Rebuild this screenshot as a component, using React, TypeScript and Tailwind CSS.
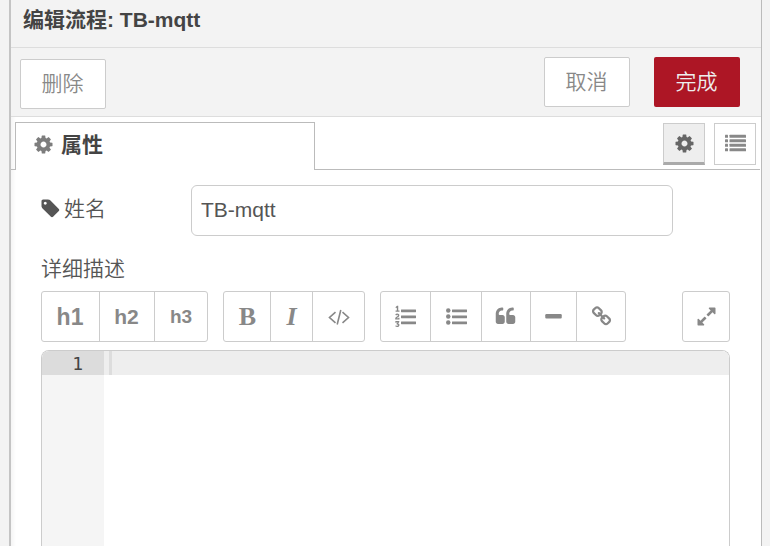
import type { ReactNode } from "react";

const COG =
  "M1152 896q0-106-75-181t-181-75-181 75-75 181 75 181 181 75 181-75 75-181zm512-109v222q0 12-8 23t-20 13l-185 28q-19 54-39 91 35 50 107 138 10 12 10 25t-9 23q-27 37-99 108t-94 71q-12 0-26-9l-138-108q-44 23-91 38-16 136-29 186-7 28-36 28h-222q-14 0-24.5-8.5t-11.5-21.5l-28-184q-49-16-90-37l-141 107q-10 9-25 9-14 0-25-11-126-114-165-168-7-10-7-23 0-12 8-23 15-21 51-66.5t54-70.5q-27-50-41-99l-183-27q-13-2-21-12.5t-8-23.5v-222q0-12 8-23t19-13l186-28q14-46 39-92-40-57-107-138-10-12-10-24 0-10 9-23 26-36 98.5-107.5t94.5-71.5q13 0 26 10l138 107q44-23 91-38 16-136 29-186 7-28 36-28h222q14 0 24.5 8.5t11.5 21.5l28 184q49 16 90 37l142-107q9-9 24-9 13 0 25 10 129 119 165 170 7 8 7 22 0 12-8 23-15 21-51 66.5t-54 70.5q26 50 41 98l183 28q13 2 21 12.5t8 23.5z";
const TAG =
  "M576 448q0-53-37.5-90.5t-90.5-37.5-90.5 37.5-37.5 90.5 37.5 90.5 90.5 37.5 90.5-37.5 37.5-90.5zm1067 576q0 53-37 90l-491 492q-39 37-91 37-53 0-90-37l-715-716q-38-37-64.5-101t-26.5-117v-416q0-52 38-90t90-38h416q53 0 117 26.5t102 64.5l715 714q37 39 37 91z";
const DIGITS =
  "M381 1620q0 80-54.5 126t-135.5 46q-106 0-172-66l57-88q49 45 106 45 29 0 50.5-14.5t21.5-42.5q0-64-105-56l-26-56q8-10 32.5-43.5t42.5-54 37-38.5v-1q-16 0-48.5 1t-48.5 1v53h-106v-152h333v88l-95 115q51 12 81 49t30 88zm2-627v159h-362q-6-36-6-54 0-51 23.5-93t56.5-68 66-47.5 56.5-43.5 23.5-45q0-25-14.5-38.5t-39.5-13.5q-46 0-81 58l-85-59q24-51 71.5-79.5t105.5-28.5q73 0 123 41.5t50 112.5q0 50-34 91.5t-75 64.5-75.5 50.5-35.5 52.5h127v-60h105zm1-609v99h-335v-99h107q0-41 .5-121.5t.5-121.5v-12h-2q-8 17-50 54l-71-76 136-127h106v404h108z";
const QUOTE =
  "v384q0 80-56 136t-136 56h-384q-80 0-136-56t-56-136v-704q0-104 40.5-198.5t109.5-163.5 163.5-109.5 198.5-40.5h64q26 0 45 19t19 45v128q0 26-19 45t-45 19h-64q-106 0-181 75t-75 181v32q0 40 28 68t68 28h224q80 0 136 56t56 136z";
const LINK =
  "M1520 1216q0-40-28-68l-208-208q-28-28-68-28-42 0-72 32 3 3 19 18.5t21.5 21.5 15 19 13 25.5 3.5 27.5q0 40-28 68t-68 28q-15 0-27.5-3.5t-25.5-13-19-15-21.5-21.5-18.5-19q-33 31-33 73 0 40 28 68l206 207q27 27 68 27 40 0 68-26l147-146q28-28 28-67zm-703-705q0-40-28-68l-206-207q-28-28-68-28-39 0-68 27l-147 146q-28 28-28 67 0 40 28 68l208 208q27 27 68 27 42 0 72-31-3-3-19-18.5t-21.5-21.5-15-19-13-25.5-3.5-27.5q0-40 28-68t68-28q15 0 27.5 3.5t25.5 13 19 15 21.5 21.5 18.5 19q33-31 33-73zm895 705q0 120-85 203l-147 146q-83 83-203 83-121 0-204-85l-206-207q-83-83-83-203 0-123 88-209l-88-88q-86 88-208 88-120 0-204-84l-208-208q-84-84-84-204t85-203l147-146q83-83 203-83 121 0 204 85l206 207q83 83 83 203 0 123-88 209l88 88q86-88 208-88 120 0 204 84l208 208q84 84 84 204z";
const EXPAND =
  "M883 1056q0 13-10 23l-332 332 144 144q19 19 19 45t-19 45-45 19h-448q-26 0-45-19t-19-45v-448q0-26 19-45t45-19 45 19l144 144 332-332q10-10 23-10t23 10l114 114q10 10 10 23zm781-864v448q0 26-19 45t-45 19-45-19l-144-144-332 332q-10 10-23 10t-23-10l-114-114q-10-10-10-23t10-23l332-332-144-144q-19-19-19-45t19-45 45-19h448q26 0 45 19t19 45z";

function Icon({ d, children, className = "" }: { d?: string; children?: ReactNode; className?: string }) {
  return (
    <svg viewBox="0 0 1792 1792" fill="currentColor" className={`size-[21px] shrink-0 overflow-visible ${className}`}>
      {d && <path d={d} />}
      {children}
    </svg>
  );
}

function Bars() {
  return (
    <>
      {[288, 800, 1312].map((y) => (
        <rect key={y} x="512" y={y} width="1280" height="240" rx="32" />
      ))}
    </>
  );
}

function Tool({ w, children }: { w: string; children: ReactNode }) {
  return (
    <button className={`flex h-full items-center justify-center border-r border-[#ccc] last:border-r-0 ${w}`}>
      {children}
    </button>
  );
}

function Group({ children, className = "" }: { children: ReactNode; className?: string }) {
  return <div className={`flex h-[51px] rounded-[3px] border border-[#ccc] bg-white ${className}`}>{children}</div>;
}

export default function App() {
  return (
    <div className="flex h-[546px] w-[770px] overflow-hidden bg-[#f3f3f3] font-['Liberation_Sans','Noto_Sans_CJK_SC',sans-serif] text-[21px] leading-[30px] text-[#555]">
      <div className="w-[9px] shrink-0" />
      <div className="flex w-[753px] shrink-0 flex-col border-r border-l-2 border-r-[#bbb] border-l-[#c4c4c4]">
        <header className="h-12 border-b border-[#ddd] pt-[5px] pl-3 font-bold text-[#444]">编辑流程: TB-mqtt</header>
        <div className="flex h-[69px] items-start border-b border-[#ddd] pt-[9px] pr-[21px] pl-[9px] font-[350] text-[#888]">
          <button className="mt-[2px] h-[50px] w-[86px] rounded-[2px] border border-[#ccc] bg-white pr-px">删除</button>
          <button className="ml-auto h-[50px] w-[86px] rounded-[2px] border border-[#ccc] bg-white pr-px">取消</button>
          <button className="ml-6 h-[50px] w-[86px] rounded-[2px] bg-[#ad1625] pr-px text-[#eee]">完成</button>
        </div>

        <main className="flex flex-1 flex-col bg-white bg-linear-to-r from-[#f5f5f5] to-white to-[5px]">
          <div className="flex h-[53px] pt-[5px]">
            <div className="w-1 border-b border-[#bbb]" />
            <div className="flex w-[300px] items-start border border-b-0 border-[#bbb] bg-white pt-[7px] pl-[17px] font-bold text-[#444]">
              <Icon d={COG} className="mt-1 text-[#7d7d7d]" />
              <span className="ml-[7px]">属性</span>
            </div>
            <div className="mr-px flex flex-1 justify-end border-b border-[#bbb] pt-px pr-1 text-[#888]">
              <button className="flex size-[42px] items-center justify-center border border-b-[3px] border-[#ccc] border-b-[#aaa] bg-[#eee] text-[#666]">
                <Icon d={COG} className="mt-px" />
              </button>
              <button className="ml-[9px] flex size-[42px] items-center justify-center border border-[#ccc] bg-white">
                <Icon className="mb-[2px]">
                  {[156, 540, 924, 1308].map((y) => (
                    <g key={y} transform={`translate(0 ${y})`}>
                      <rect width="256" height="256" rx="32" />
                      <rect x="384" width="1408" height="256" rx="32" />
                    </g>
                  ))}
                </Icon>
              </button>
            </div>
          </div>

          <div className="flex flex-1 flex-col pt-[15px] pr-[31px] pl-[30px]">
            <div className="flex h-[51px]">
              <label className="flex w-[150px] pt-[9px] font-[350]">
                <Icon d={TAG} className="mt-1 -ml-px" />
                <span className="ml-[3px]">姓名</span>
              </label>
              <input
                defaultValue="TB-mqtt"
                className="h-[51px] w-[482px] rounded-[6px] border border-[#ccc] bg-white px-[9px] pb-px text-[#555] outline-none"
              />
            </div>
            <div className="mt-[18px] h-[37px] font-[350]">详细描述</div>

            <div className="flex text-[#888]">
              <Group>
                <Tool w="w-[58px]"><b className="pr-px text-[23px]">h1</b></Tool>
                <Tool w="w-[55px]"><b className="pr-px text-[21px]">h2</b></Tool>
                <Tool w="w-[52px]"><b className="text-[19px]">h3</b></Tool>
              </Group>
              <Group className="ml-[15px]">
                <Tool w="w-[47px]"><b className="pl-px font-['Liberation_Serif',serif] text-[26px]">B</b></Tool>
                <Tool w="w-[42px]"><b className="font-['Liberation_Serif',serif] text-[26px] italic">I</b></Tool>
                <Tool w="w-[51px]">
                  <svg viewBox="0 0 22 18" className="h-[18px] w-[22px]" fill="none" stroke="currentColor" strokeWidth="1.6">
                    <path d="M7.5 4.2 1.5 9.5l6 5.3M14.5 4.2l6 5.3-6 5.3M12.8 2 9.2 16.5" />
                  </svg>
                </Tool>
              </Group>
              <Group className="ml-[15px]">
                <Tool w="w-[50px]"><Icon d={DIGITS}><Bars /></Icon></Tool>
                <Tool w="w-[51px]">
                  <Icon>
                    <Bars />
                    {[384, 896, 1408].map((y) => <circle key={y} cx="192" cy={y} r="192" />)}
                  </Icon>
                </Tool>
                <Tool w="w-[49px]"><Icon className="mr-px" d={`M832 960${QUOTE}M1728 960${QUOTE}`} /></Tool>
                <Tool w="w-[46px]"><Icon><rect x="192" y="690" width="1408" height="384" rx="96" /></Icon></Tool>
                <Tool w="w-[48px]"><Icon d={LINK} /></Tool>
              </Group>
              <Group className="ml-auto">
                <Tool w="w-[46px]"><Icon d={EXPAND} /></Tool>
              </Group>
            </div>

            <div className="mt-2 flex flex-1 overflow-hidden rounded-t-[8px] border border-b-0 border-[#ccc] font-['DejaVu_Sans_Mono',monospace] text-[18px] leading-[25px] text-[#444]">
              <div className="w-[62px] shrink-0 bg-[#f5f5f5]">
                <div className="h-6 bg-[#dcdcdc] pr-[21px] text-right">1</div>
              </div>
              <div className="flex-1 bg-white">
                <div className="h-6 bg-[#eee] pl-[5px]">
                  <div className="h-6 w-[3px] bg-[#ddd]" />
                </div>
              </div>
            </div>
          </div>
        </main>
      </div>
      <div className="flex-1" />
    </div>
  );
}
